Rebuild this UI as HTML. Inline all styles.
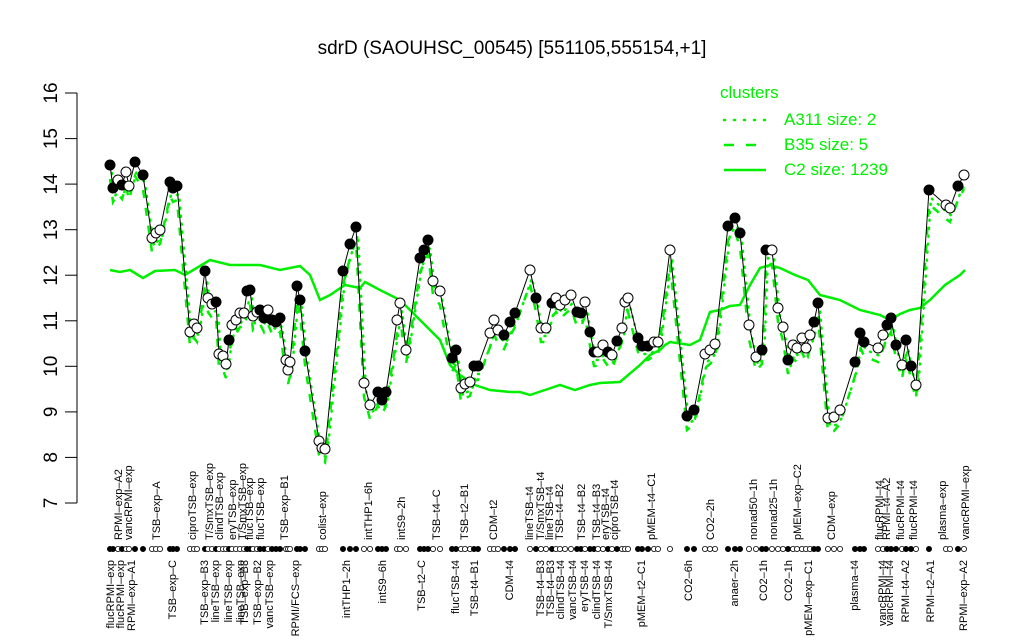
<!DOCTYPE html>
<html><head><meta charset="utf-8"><style>
html,body{margin:0;padding:0;background:#fff;width:1024px;height:640px;overflow:hidden}
svg{display:block;font-family:"Liberation Sans",sans-serif}
.t text{font-size:11px}
</style></head><body>
<svg id="s" width="1024" height="640" viewBox="0 0 1024 640" xmlns="http://www.w3.org/2000/svg">
<text x="512" y="54" font-size="19" text-anchor="middle">sdrD (SAOUHSC_00545) [551105,555154,+1]</text>
<g stroke="#000" stroke-width="1">
<line x1="77" y1="93" x2="77" y2="503"/>
<line x1="65" y1="93" x2="77" y2="93"/><line x1="65" y1="138.6" x2="77" y2="138.6"/><line x1="65" y1="184.1" x2="77" y2="184.1"/><line x1="65" y1="229.7" x2="77" y2="229.7"/><line x1="65" y1="275.2" x2="77" y2="275.2"/><line x1="65" y1="320.8" x2="77" y2="320.8"/><line x1="65" y1="366.3" x2="77" y2="366.3"/><line x1="65" y1="411.9" x2="77" y2="411.9"/><line x1="65" y1="457.4" x2="77" y2="457.4"/><line x1="65" y1="503" x2="77" y2="503"/>
</g>
<g font-size="19" text-anchor="middle">
<text transform="translate(50,93) rotate(-90)" y="7">16</text>
<text transform="translate(50,138.6) rotate(-90)" y="7">15</text>
<text transform="translate(50,184.1) rotate(-90)" y="7">14</text>
<text transform="translate(50,229.7) rotate(-90)" y="7">13</text>
<text transform="translate(50,275.2) rotate(-90)" y="7">12</text>
<text transform="translate(50,320.8) rotate(-90)" y="7">11</text>
<text transform="translate(50,366.3) rotate(-90)" y="7">10</text>
<text transform="translate(50,411.9) rotate(-90)" y="7">9</text>
<text transform="translate(50,457.4) rotate(-90)" y="7">8</text>
<text transform="translate(50,503) rotate(-90)" y="7">7</text>
</g>
<g id="plot"></g>
<g fill="#00ee00" font-size="17">
<text x="720" y="98">clusters</text>
<text x="784" y="125">A311 size: 2</text>
<text x="784" y="150">B35 size: 5</text>
<text x="784" y="175">C2 size: 1239</text>
</g>
<g stroke="#00ee00" stroke-width="2.5">
<line x1="724" y1="120" x2="766" y2="120" stroke-dasharray="1 9" stroke-linecap="round"/>
<line x1="724" y1="145" x2="766" y2="145" stroke-dasharray="10 12"/>
<line x1="724" y1="170" x2="766" y2="170"/>
</g>
<g class="t" id="top">
<text transform="translate(122,540) rotate(-90)">RPMI–exp–A2</text>
<text transform="translate(132,540) rotate(-90)">vancRPMI–exp</text>
<text transform="translate(160,540) rotate(-90)">TSB–exp–A</text>
<text transform="translate(196,540) rotate(-90)">ciproTSB–exp</text>
<text transform="translate(213,540) rotate(-90)">T/SmxTSB–exp</text>
<text transform="translate(223,540) rotate(-90)">clindTSB–exp</text>
<text transform="translate(236,540) rotate(-90)">eryTSB–exp</text>
<text transform="translate(246,540) rotate(-90)">T/SmxTSB–exp</text>
<text transform="translate(253,540) rotate(-90)">flucTSB–exp</text>
<text transform="translate(264,540) rotate(-90)">flucTSB–exp</text>
<text transform="translate(288,540) rotate(-90)">TSB–exp–B1</text>
<text transform="translate(326,540) rotate(-90)">colist–exp</text>
<text transform="translate(372,540) rotate(-90)">intTHP1–6h</text>
<text transform="translate(405,540) rotate(-90)">intS9–2h</text>
<text transform="translate(440,540) rotate(-90)">TSB–t4–C</text>
<text transform="translate(468,540) rotate(-90)">TSB–t2–B1</text>
<text transform="translate(497,540) rotate(-90)">CDM–t2</text>
<text transform="translate(533,540) rotate(-90)">lineTSB–t4</text>
<text transform="translate(544,540) rotate(-90)">T/SmxTSB–t4</text>
<text transform="translate(553,540) rotate(-90)">lineTSB–t4</text>
<text transform="translate(563,540) rotate(-90)">TSB–t4–B2</text>
<text transform="translate(585,540) rotate(-90)">TSB–t4–B2</text>
<text transform="translate(600,540) rotate(-90)">TSB–t4–B3</text>
<text transform="translate(609,540) rotate(-90)">eryTSB–t4</text>
<text transform="translate(618,540) rotate(-90)">ciproTSB–t4</text>
<text transform="translate(655,540) rotate(-90)">pMEM–t4–C1</text>
<text transform="translate(714,540) rotate(-90)">CO2–2h</text>
<text transform="translate(757,540) rotate(-90)">nonad50–1h</text>
<text transform="translate(777,540) rotate(-90)">nonad25–1h</text>
<text transform="translate(801,540) rotate(-90)">pMEM–exp–C2</text>
<text transform="translate(835,540) rotate(-90)">CDM–exp</text>
<text transform="translate(883,540) rotate(-90)">flucRPMI–t4</text>
<text transform="translate(890,540) rotate(-90)">RPMI–t4–A2</text>
<text transform="translate(904,540) rotate(-90)">flucRPMI–t4</text>
<text transform="translate(917,540) rotate(-90)">flucRPMI–t4</text>
<text transform="translate(946,540) rotate(-90)">plasma–exp</text>
<text transform="translate(969,540) rotate(-90)">vancRPMI–exp</text>
</g>
<g class="t" text-anchor="end">
<text transform="translate(114,560) rotate(-90)">flucRPMI–exp</text>
<text transform="translate(124,560) rotate(-90)">flucRPMI–exp</text>
<text transform="translate(135,560) rotate(-90)">RPMI–exp–A1</text>
<text transform="translate(176,560) rotate(-90)">TSB–exp–C</text>
<text transform="translate(208,560) rotate(-90)">TSB–exp–B3</text>
<text transform="translate(219,560) rotate(-90)">lineTSB–exp</text>
<text transform="translate(232,560) rotate(-90)">lineTSB–exp</text>
<text transform="translate(244,560) rotate(-90)">lineTSB–exp</text>
<text transform="translate(248,560) rotate(-90)">TSB–exp–B3</text>
<text transform="translate(261,560) rotate(-90)">TSB–exp–B2</text>
<text transform="translate(273,560) rotate(-90)">vancTSB–exp</text>
<text transform="translate(299,560) rotate(-90)">RPMI/FCS–exp</text>
<text transform="translate(350,560) rotate(-90)">intTHP1–2h</text>
<text transform="translate(386,560) rotate(-90)">intS9–6h</text>
<text transform="translate(425,560) rotate(-90)">TSB–t2–C</text>
<text transform="translate(459,560) rotate(-90)">flucTSB–t4</text>
<text transform="translate(478,560) rotate(-90)">TSB–t4–B1</text>
<text transform="translate(513,560) rotate(-90)">CDM–t4</text>
<text transform="translate(544,560) rotate(-90)">TSB–t4–B3</text>
<text transform="translate(554,560) rotate(-90)">TSB–t4–B3</text>
<text transform="translate(564,560) rotate(-90)">clindTSB–t4</text>
<text transform="translate(576,560) rotate(-90)">vancTSB–t4</text>
<text transform="translate(588,560) rotate(-90)">eryTSB–t4</text>
<text transform="translate(600,560) rotate(-90)">clindTSB–t4</text>
<text transform="translate(612,560) rotate(-90)">T/SmxTSB–t4</text>
<text transform="translate(645,560) rotate(-90)">pMEM–t2–C1</text>
<text transform="translate(692,560) rotate(-90)">CO2–6h</text>
<text transform="translate(738,560) rotate(-90)">anaer–2h</text>
<text transform="translate(767,560) rotate(-90)">CO2–1h</text>
<text transform="translate(792,560) rotate(-90)">CO2–1h</text>
<text transform="translate(812,560) rotate(-90)">pMEM–exp–C1</text>
<text transform="translate(858,560) rotate(-90)">plasma–t4</text>
<text transform="translate(886,560) rotate(-90)">vancRPMI–t4</text>
<text transform="translate(893,560) rotate(-90)">vancRPMI–t4</text>
<text transform="translate(909,560) rotate(-90)">RPMI–t4–A2</text>
<text transform="translate(934,560) rotate(-90)">RPMI–t2–A1</text>
<text transform="translate(967,560) rotate(-90)">RPMI–exp–A2</text>
</g>
</svg>
<script>
var P=[[110,165,1],[113,188,1],[118,180,0],[122,185,1],[126,172,0],[129,186,0],[135,162,1],[143,175,1],[152,238,0],[156,233,0],[160,230,0],[170,182,1],[173,188,1],[177,186,1],[190,332,0],[194,324,0],[197,328,0],[205,271,1],[208,298,0],[212,304,0],[216,302,1],[219,354,0],[223,356,0],[226,364,0],[229,340,1],[232,325,0],[236,320,0],[240,313,0],[244,313,0],[247,291,1],[250,290,1],[253,316,0],[257,312,0],[260,310,1],[264,318,1],[268,310,0],[272,320,1],[276,322,1],[280,318,1],[286,360,0],[288,370,0],[290,362,0],[297,286,1],[300,300,1],[305,351,1],[319,441,0],[322,448,0],[325,449,0],[343,271,1],[350,244,1],[356,227,1],[364,383,0],[370,405,0],[378,392,1],[382,400,1],[386,392,1],[397,320,0],[400,303,0],[406,350,0],[420,258,1],[424,250,1],[428,240,1],[433,281,0],[440,291,0],[452,358,1],[456,350,1],[461,388,0],[465,384,0],[470,382,0],[474,366,1],[478,366,1],[490,333,0],[494,320,0],[498,330,0],[504,335,1],[510,322,1],[515,313,1],[530,270,0],[536,298,1],[541,328,0],[546,328,0],[552,303,1],[556,298,0],[560,305,0],[565,300,0],[571,295,0],[577,312,1],[581,313,1],[585,302,0],[590,332,1],[594,352,1],[598,352,0],[603,345,0],[608,352,1],[612,355,0],[617,341,1],[622,328,0],[625,302,0],[628,298,0],[638,338,1],[642,346,1],[648,346,1],[654,342,0],[658,342,0],[670,250,0],[687,416,1],[694,410,1],[705,354,0],[710,350,0],[715,344,0],[728,226,1],[735,218,1],[740,233,1],[749,325,0],[756,357,0],[762,350,1],[766,250,1],[772,250,0],[778,308,0],[783,327,0],[788,360,1],[793,345,0],[797,348,0],[802,338,0],[806,348,0],[810,335,0],[814,322,1],[818,303,1],[828,418,0],[834,417,0],[840,410,0],[855,362,1],[860,333,1],[864,342,1],[878,348,0],[883,335,0],[887,325,1],[891,318,1],[896,345,1],[902,365,0],[906,340,1],[911,366,1],[916,385,0],[929,190,1],[946,205,0],[950,208,0],[958,186,1],[964,175,0]];
var C2="110,270 120,272 130,270 143,278 155,271 175,270 185,275 200,266 210,260 230,265 260,265 280,270 300,266 310,275 320,300 330,295 345,285 360,288 365,282 380,290 400,300 420,320 440,340 450,365 460,375 475,385 490,390 510,392 520,392 530,395 545,390 560,385 575,390 590,385 600,383 620,382 640,365 650,355 660,350 665,345 670,342 690,345 700,340 710,312 720,310 730,306 740,305 745,295 750,285 760,268 770,265 780,268 795,275 808,280 820,295 840,300 860,310 880,315 890,320 900,314 910,310 920,308 930,300 945,285 960,275 965,270";
var h='<polyline points="'+C2+'" fill="none" stroke="#00ee00" stroke-width="2.5"/>';
var d=P.map(function(p){return p[0]+','+(p[1]+14)}).join(' ');
h+='<polyline points="'+d+'" fill="none" stroke="#00ee00" stroke-width="2.5" stroke-dasharray="8 10"/>';
var d2=P.map(function(p){return (p[0]+2)+','+(p[1]+8)}).join(' ');
h+='<polyline points="'+d2+'" fill="none" stroke="#00ee00" stroke-width="2.5" stroke-dasharray="1 7" stroke-linecap="round"/>';
h+='<polyline points="'+P.map(function(p){return p[0]+','+p[1]}).join(' ')+'" fill="none" stroke="#000" stroke-width="1"/>';
P.forEach(function(p){h+='<circle cx="'+p[0]+'" cy="'+p[1]+'" r="5" fill="'+(p[2]?'#000':'#fff')+'" stroke="#000" stroke-width="1"/>';
h+='<circle cx="'+p[0]+'" cy="549" r="2.6" fill="'+(p[2]?'#000':'#fff')+'" stroke="#000" stroke-width="0.8"/>';});
document.getElementById('plot').innerHTML=h;
</script>
</body></html>
